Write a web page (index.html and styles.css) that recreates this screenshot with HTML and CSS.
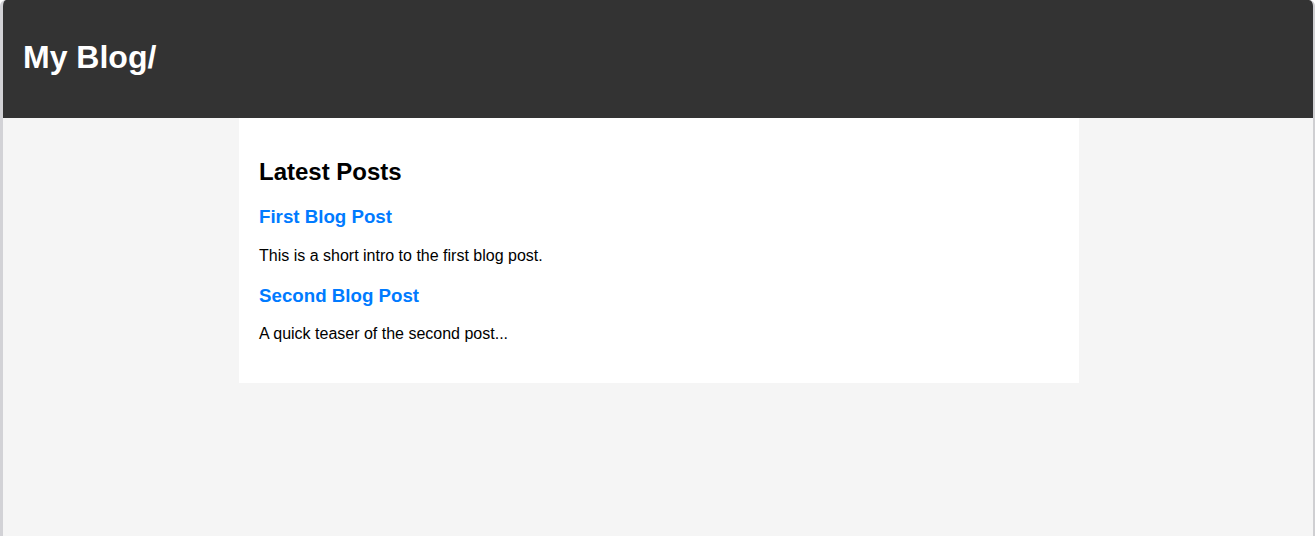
FILE: index.html
```html
<!DOCTYPE html>
<html lang="en">
<head>
<meta charset="utf-8">
<title>My Blog</title>
<link rel="stylesheet" href="styles.css">
</head>
<body>
<div class="frame">
  <header class="site-header">
    <h1 class="site-title">My Blog/</h1>
  </header>
  <main class="content">
    <h2 class="section-title">Latest Posts</h2>
    <article class="post">
      <h3 class="post-title"><a href="#">First Blog Post</a></h3>
      <p class="post-intro">This is a short intro to the first blog post.</p>
    </article>
    <article class="post">
      <h3 class="post-title"><a href="#">Second Blog Post</a></h3>
      <p class="post-intro">A quick teaser of the second post...</p>
    </article>
  </main>
</div>
</body>
</html>
```
FILE: styles.css
```css
html, body {
  margin: 0;
  padding: 0;
  height: 100%;
}
body {
  background: #ffffff;
  font-family: "Liberation Sans", Arial, sans-serif;
  color: #000;
}
.frame {
  box-sizing: border-box;
  min-height: 100vh;
  background: #f5f5f5;
  border-left: 3px solid #d2d2d6;
  border-right: 2px solid #cfcfd2;
  border-radius: 6px 6px 0 0;
  overflow: hidden;
}
.site-header {
  background: #333333;
  color: #ffffff;
  padding: 20px;
}
.site-title {
  margin: 19px 0 22px;
  font-size: 32px;
  font-weight: bold;
}
.content {
  box-sizing: border-box;
  width: 840px;
  margin: 0 0 0 calc(50% - 419px);
  background: #ffffff;
  padding: 20px;
}
.section-title {
  font-size: 24px;
  margin: 0.83em 0;
}
.post {
  margin-bottom: 20px;
}
.post-title {
  font-size: 18.72px;
  margin: 1em 0;
}
.post-title a {
  color: #007bff;
  text-decoration: none;
}
.post-intro {
  font-size: 16px;
  margin: 16px 0;
}
```
